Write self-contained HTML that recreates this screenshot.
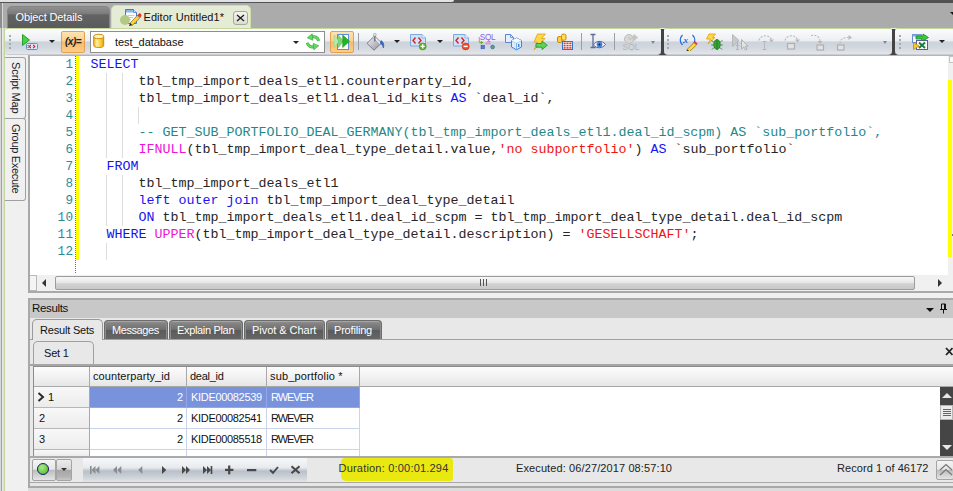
<!DOCTYPE html>
<html>
<head>
<meta charset="utf-8">
<title>Editor Untitled1*</title>
<style>
html,body{margin:0;padding:0;}
body{width:953px;height:491px;overflow:hidden;position:relative;background:#f0f0f0;font-family:"Liberation Sans",sans-serif;font-size:11px;color:#1e1e1e;}
.abs{position:absolute;}
div,span,svg{box-sizing:border-box;}
/* top band */
#topband{left:0;top:0;width:953px;height:28px;background:#ababab;}
#topline1{left:0;top:0;width:454px;height:2px;background:#dfe3e6;border-radius:0 0 3px 0;}
#topline2{left:0;top:0;width:953px;height:3px;background:#525252;}
#leftstrip{left:0;top:28px;width:5px;height:463px;background:linear-gradient(90deg,#d8d8d8 0 1px,#a2a2a2 1px 2px,#e8e8e8 2px 3px,#dcdcdc 3px 4px,#c3d69b 4px 5px);}
#leftstrip2{left:0;top:3px;width:3px;height:25px;background:linear-gradient(90deg,#8e8e8e 0 2px,#d8d8d8 2px 3px);}
/* tabs */
#tabObj{left:7px;top:6px;width:103px;height:23px;border-radius:5px 5px 0 0;background:linear-gradient(#909090,#7c7c7c 30%,#636363 36%,#5a5a5a);border:1px solid #858585;border-bottom:none;color:#fff;font-size:12px;line-height:22px;padding-left:8px;}
#tabEd{left:111px;top:5px;width:140px;height:24px;border-radius:5px 5px 0 0;background:#e5ecd5;border:1px solid #cfe0a8;border-bottom:none;color:#1e1e1e;font-size:12px;line-height:23px;}
/* toolbar */
.tb{top:28px;height:27px;background:linear-gradient(#fbfcfd,#eceef2 47%,#cdd3db 52%,#d3d8df 75%,#e2e5e9);border-top:1px solid #c6d79b;border-bottom:1px solid #c9ccd1;}
.orange{background:linear-gradient(#fde3b4,#fbcf8e 45%,#f9b863 50%,#fbd08c);border:1px solid #e9a04c;border-radius:2px;}
.arrow{width:0;height:0;border-left:3px solid transparent;border-right:3px solid transparent;border-top:3px solid #222;}
.sep{top:33px;width:1px;height:17px;background:#9a9ea6;}
/* editor */
#editor{left:28px;top:55px;width:925px;height:236px;background:#fff;border-left:2px solid #a9a9a9;border-top:1px solid #b4b4b4;}
.ln{position:absolute;left:30px;width:43.500px;text-align:right;color:#2b8c98;font-size:12.600px;letter-spacing:0.440px;height:17px;line-height:18px;font-family:"Liberation Mono",monospace;}
.cl{position:absolute;left:90.5px;white-space:pre;font-family:"Liberation Mono",monospace;font-size:13.33px;height:17px;line-height:17px;color:#262626;}
.k{color:#1414f0;}
.f{color:#f012d8;}
.s{color:#f01414;}
.c{color:#1f8888;}
.guide{position:absolute;width:1px;background:#dedede;}

/* results */
#split{left:28px;top:293px;width:925px;height:5px;background:#f0f0f0;}
#respanel{left:28px;top:298px;width:925px;height:188px;background:#e8e8e8;border-left:2px solid #a9a9a9;border-top:2px solid #a9a9a9;}
#reshead{left:30px;top:300px;width:923px;height:18px;background:#c8c8c8;}
.t{position:absolute;font-size:11px;line-height:14px;white-space:nowrap;color:#111;}
.rtab{top:320px;height:19px;border-radius:4px 4px 0 0;background:linear-gradient(#969696,#858585 12%,#707070 47%,#5b5b5b 53%,#666);border:1px solid #6c6c6c;border-bottom:none;box-shadow:inset 1px 0 0 #8c8c8c,inset -1px 0 0 #8c8c8c,inset 0 1px 0 #a4a4a4;}
.rtab .t{color:#fff;top:2px;}
#rtabsel{left:32px;top:319px;width:71px;height:21px;border-radius:5px 5px 0 0;background:#e8e8e8;border:1px solid #9a9a9a;border-bottom:none;}
#tabline{left:30px;top:339px;width:923px;height:1px;background:#a0a0a0;}
#settab{left:33px;top:341px;width:61px;height:24px;border-radius:5px 5px 0 0;background:#e8e8e8;border:1px solid #a0a0a0;border-bottom:none;}
#setline{left:30px;top:364px;width:923px;height:2px;background:#a6a6a6;}
#grid{left:33px;top:366px;width:920px;height:90px;background:#fff;border-top:1px solid #8c8c8c;border-left:1px solid #8c8c8c;}
.gh{position:absolute;top:367px;height:20px;background:linear-gradient(#fcfcfc,#f2f2f2 50%,#e6e6e6);border-right:1px solid #a8a8a8;border-bottom:1px solid #a8a8a8;}
.rh{position:absolute;left:34px;width:56px;height:21px;background:linear-gradient(#f8f8f8,#ececec);border-right:1px solid #a8a8a8;border-bottom:1px solid #b8b8b8;}
.gc{position:absolute;height:21px;border-right:1px solid #c9d3ea;border-bottom:1px solid #c9d3ea;background:#fff;}
.gc.sel{background:#7892dc;border-color:#92a8e6;}
.gc.sel .t{color:#fff;}
#status{left:30px;top:456px;width:923px;height:26px;background:#e8e8e8;border-top:2px solid #a9a9a9;}
.sbtn{position:absolute;top:459px;height:22px;border:1px solid #a4a4a4;border-radius:2px;background:linear-gradient(#f4f4f4,#e6e6e6 46%,#bdbdbd 52%,#d4d4d4 80%,#e4e4e4);}
#nav{left:83px;top:458px;width:224px;height:24px;background:linear-gradient(#f6f7f9,#e8ebee 40%,#b8c0c9 55%,#c8ced5 75%,#e2e5e8);}
.vt{writing-mode:vertical-rl;font-size:11px;line-height:14px;width:14px;color:#222;white-space:nowrap;}
</style>
</head>
<body>
<div id="topband" class="abs"></div>
<div id="topline2" class="abs"></div>
<div id="topline1" class="abs"></div>
<div class="abs" style="left:950px;top:12px;width:0;height:0;border-left:3px solid transparent;border-right:3px solid transparent;border-top:3px solid #111;"></div>
<div id="leftstrip" class="abs"></div>
<div id="leftstrip2" class="abs"></div>
<div id="tabObj" class="abs"></div>
<span class="t" style="left:15.500px;top:10px;letter-spacing:-0.12px;color:#fff">Object Details</span>
<div id="tabEd" class="abs"></div>
<svg class="abs" style="left:124px;top:8px" width="18" height="18" viewBox="0 0 18 18"><path d="M1.500 1.500 H9.500 L12.500 4.500 V15.500 H1.500 Z" fill="#fdfeff" stroke="#4a76c8"/><rect x="2" y="2" width="7.500" height="2.500" fill="#8fb4ee"/><path d="M9.500 1.500 V4.500 H12.500" fill="#dce8fa" stroke="#4a76c8" stroke-width="0.800"/><path d="M3.500 7.500 H10.500 M3.500 9.500 H9 M3.500 11.500 H7" stroke="#b8cdf0" stroke-width="1"/><path d="M6 15.200 L13.500 7.200 L16 9.700 L8.500 17.200 Z" fill="#ffd834" stroke="#7a5c10" stroke-width="0.700"/><path d="M13.500 7.200 L15 5.600 Q16 5 16.900 5.900 Q17.800 6.900 17.400 8 L16 9.700 Z" fill="#e63030"/><path d="M6 15.200 L8.500 17.200 L5 17.900 Z" fill="#222"/><path d="M12.600 8.200 L15.100 10.700" stroke="#9ab0d8" stroke-width="1"/></svg>
<div class="abs" style="left:120px;top:15px;width:10px;height:10px;border-radius:5px;background:#b1c985;"></div>
<span class="t" style="left:143.500px;top:9.500px;letter-spacing:0.06px;color:#111;font-size:11px">Editor Untitled1*</span>
<div class="abs" style="left:233px;top:11px;width:15px;height:14px;border:1px solid #a8aa98;border-radius:3px;background:linear-gradient(#f4f4ee,#dcdcd4);"></div>
<svg class="abs" style="left:236px;top:14px" width="9" height="8" viewBox="0 0 9 8"><path d="M1 1 L8 7 M8 1 L1 7" stroke="#222" stroke-width="1.400" fill="none"/></svg>

<!-- toolbars -->
<div class="abs" style="left:656px;top:29px;width:12px;height:26px;background:#444;"></div>
<div class="abs" style="left:888px;top:29px;width:12px;height:26px;background:#444;"></div>
<div class="abs tb" style="left:5px;width:656px;border-radius:3px 2px 4px 3px;"></div>
<div class="abs tb" style="left:664px;width:228px;border-radius:2px 2px 4px 4px;"></div>
<div class="abs tb" style="left:895px;width:60px;border-radius:3px 0 0 4px;"></div>

<!-- toolbar 1 contents -->
<svg class="abs" style="left:8px;top:34px" width="4" height="16" viewBox="0 0 4 16"><g fill="#a3a9b3"><rect x="1" y="1" width="2" height="2"/><rect x="1" y="5" width="2" height="2"/><rect x="1" y="9" width="2" height="2"/><rect x="1" y="13" width="2" height="2"/></g></svg>
<svg class="abs" style="left:21px;top:33px" width="18" height="18" viewBox="0 0 18 18"><path d="M1.5 1.5 L8.5 7 L1.5 12.5 Z" fill="#46d246" stroke="#2c9e2c" stroke-width="1"/><rect x="5.5" y="10.5" width="11" height="6" rx="1" fill="#d5e7f8" stroke="#5d8fd2"/><path d="M9.8 12 L8.2 13.5 L9.8 15 M12.2 12 L13.8 13.5 L12.2 15" fill="none" stroke="#d62222" stroke-width="1.1"/><rect x="6.6" y="12" width="1" height="1" fill="#d62222"/><rect x="6.6" y="14" width="1" height="1" fill="#d62222"/></svg>
<div class="abs arrow" style="left:49px;top:40px;border-left-width:3px;border-right-width:3px;border-top-width:3px"></div>
<div class="abs orange" style="left:61px;top:31px;width:24px;height:22px;"></div>
<div class="abs" style="left:65px;top:34px;width:18px;font:italic bold 10px 'Liberation Sans',sans-serif;line-height:15px;color:#222;letter-spacing:-0.5px;white-space:nowrap">(x)=</div>
<div class="abs" style="left:90px;top:31px;width:235px;height:22px;background:#fff;border:1px solid #8e8e8e;"></div>
<svg class="abs" style="left:92px;top:33px" width="14" height="16" viewBox="0 0 14 16"><defs><linearGradient id="cy" x1="0" x2="1" y1="0" y2="0"><stop offset="0" stop-color="#f2b21a"/><stop offset="0.300" stop-color="#fff0a0"/><stop offset="0.650" stop-color="#ffd23c"/><stop offset="1" stop-color="#e6a010"/></linearGradient></defs><path d="M1.700 3.500 V12.300 A5 2.200 0 0 0 11.700 12.300 V3.500 Z" fill="url(#cy)" stroke="#c98a0c"/><ellipse cx="6.700" cy="3.500" rx="5" ry="2.200" fill="#fff2b0" stroke="#c98a0c"/></svg>
<div class="abs" style="left:115px;top:35px;font-size:11px;line-height:14px;color:#111;white-space:nowrap;letter-spacing:-0.05px">test_database</div>
<div class="abs arrow" style="left:293px;top:41px;"></div>
<svg class="abs" style="left:306px;top:33px" width="14" height="17" viewBox="0 0 14 17"><path d="M12.600 7.800 C11.800 4.200 8.500 2.800 5.500 4.200" fill="none" stroke="#3aa83a" stroke-width="3"/><path d="M12.600 7.800 C11.800 4.200 8.500 2.800 5.500 4.200" fill="none" stroke="#62dc62" stroke-width="1.800"/><path d="M1.300 4.800 L6.200 0.800 L6.800 7.200 Z" fill="#62dc62" stroke="#3aa83a" stroke-width="0.700"/><path d="M1.400 9.800 C2.200 13.400 5.500 14.800 8.500 13.400" fill="none" stroke="#3aa83a" stroke-width="3"/><path d="M1.400 9.800 C2.200 13.400 5.500 14.800 8.500 13.400" fill="none" stroke="#62dc62" stroke-width="1.800"/><path d="M12.700 12.800 L7.800 16.800 L7.200 10.400 Z" fill="#62dc62" stroke="#3aa83a" stroke-width="0.700"/></svg>
<div class="abs orange" style="left:330px;top:31px;width:24px;height:22px;"></div>
<svg class="abs" style="left:333px;top:33px" width="18" height="18" viewBox="0 0 18 18"><rect x="4.500" y="1.500" width="11" height="15" fill="#fff" stroke="#5b8fd6"/><path d="M1.200 2 L6 8.300 L1.200 14.600 Z" fill="#b4ebb4" stroke="#8fd88f" stroke-width="0.500"/><path d="M5.400 2 L10.500 8.300 L5.400 14.600 Z" fill="#74d874" stroke="#52bd52" stroke-width="0.500"/><path d="M9.700 2 L16.600 8.300 L9.700 14.600 Z" fill="#22b422" stroke="#188a18" stroke-width="0.500"/></svg>
<div class="abs sep" style="left:358px;"></div>
<svg class="abs" style="left:366px;top:33px" width="19" height="18" viewBox="0 0 19 18"><defs><linearGradient id="bk" x1="0" y1="0" x2="1" y2="1"><stop offset="0" stop-color="#f4f4f8"/><stop offset="0.500" stop-color="#c2c2ca"/><stop offset="1" stop-color="#8e8e98"/></linearGradient></defs><path d="M1 10.300 L8.500 3 L15.500 10 L8 17.200 Z" fill="url(#bk)" stroke="#74747e" stroke-width="0.900"/><path d="M8.500 3 L15.500 10 L13.800 11.600 L6.800 4.600 Z" fill="#e9e9ee" stroke="#8a8a94" stroke-width="0.500"/><path d="M8.800 1.500 V8.500" stroke="#6a6a72" stroke-width="1.300" fill="none"/><circle cx="8.800" cy="1.800" r="1.400" fill="#f4f4f4" stroke="#8a8a8a" stroke-width="0.600"/><path d="M15 7.500 C17.800 9 18.400 12.500 17.300 15 C16.800 12.800 16.300 11.500 14.300 10.300 Z" fill="#2f66d4" stroke="#1f4cae" stroke-width="0.500"/></svg>
<div class="abs arrow" style="left:394px;top:40px;"></div>
<svg class="abs" style="left:409px;top:33px" width="19" height="18" viewBox="0 0 19 18"><path d="M1.500 1.500 H13 L16.500 5 V13 H1.500 Z" fill="#cfe3f8" stroke="#7fa8dc"/><path d="M13 1.5 V5 H16.5" fill="#eef5fd" stroke="#7fa8dc" stroke-width="0.8"/><path d="M6.5 4.5 L4 7.5 L6.5 10.5 M9.5 4.5 L12 7.5 L9.5 10.5" fill="none" stroke="#d62222" stroke-width="1.4"/><circle cx="13.700" cy="13.400" r="3.500" fill="#5fb52a" stroke="#3f8f14" stroke-width="0.600"/><path d="M13.700 11.300 V15.500 M11.600 13.400 H15.800" stroke="#fff" stroke-width="1.400"/></svg>
<div class="abs arrow" style="left:437px;top:40px;"></div>
<svg class="abs" style="left:452px;top:33px" width="19" height="18" viewBox="0 0 19 18"><path d="M1.500 1.500 H13 L16.500 5 V13 H1.500 Z" fill="#cfe3f8" stroke="#7fa8dc"/><path d="M13 1.5 V5 H16.5" fill="#eef5fd" stroke="#7fa8dc" stroke-width="0.8"/><path d="M6.5 4.5 L4 7.5 L6.5 10.5 M9.5 4.5 L12 7.5 L9.5 10.5" fill="none" stroke="#d62222" stroke-width="1.4"/><circle cx="13.700" cy="13.400" r="3.500" fill="#ee4a2a" stroke="#c42e12" stroke-width="0.600"/><path d="M11.600 13.400 H15.800" stroke="#fff" stroke-width="1.500"/></svg>
<!-- SQL icon -->
<svg class="abs" style="left:478px;top:33px" width="18" height="17" viewBox="0 0 18 17"><text x="1.800" y="7" font-family="Liberation Sans, sans-serif" font-size="8.200" fill="#8562ee" letter-spacing="-0.300">SQL</text><path d="M1.300 4 V9.500 H3" fill="none" stroke="#8aa030" stroke-width="0.800"/><path d="M2.800 7.800 L5.200 9.500 L2.800 11.200 Z" fill="#58a818"/><path d="M7.500 11 L10 8 L12.500 11 Z" fill="#f4a2dc" stroke="#dc6cc0" stroke-width="0.500"/><rect x="3" y="12.200" width="3.600" height="3.600" fill="#5878d8" stroke="#3858b0" stroke-width="0.500"/><circle cx="14.600" cy="14" r="1.900" fill="#58a868" stroke="#4868c8" stroke-width="0.700"/></svg>
<!-- copy cube -->
<svg class="abs" style="left:504px;top:33px" width="19" height="18" viewBox="0 0 19 18"><path d="M1.5 1.5 H6.5 L9.5 4.5 V9.5 H1.5 Z" fill="#e6effb" stroke="#5a86d0"/><path d="M6.5 1.5 V4.5 H9.5" fill="none" stroke="#5a86d0" stroke-width="0.8"/><path d="M7.5 7.5 L12.5 5 L17.5 7.5 V14 L12.5 16.8 L7.5 14 Z" fill="#d9ecfb" stroke="#3f86dc"/><path d="M7.5 7.5 L12.5 10 L17.5 7.5 M12.5 10 V16.8" fill="none" stroke="#6aa6e8" stroke-width="0.8"/><path d="M12.5 5 L17.5 7.5 L12.5 10 L7.5 7.5 Z" fill="#f4faff"/><rect x="14" y="11" width="1.4" height="3" fill="#3f86dc"/></svg>
<!-- lightning + arrow -->
<svg class="abs" style="left:531px;top:33px" width="18" height="18" viewBox="0 0 18 18"><path d="M6.500 1 H14.500 L10.500 5.500 H14 L3 17 L6.500 9 H3 Z" fill="#ffd84a" stroke="#e0a010" stroke-width="0.800"/><path d="M5 10.500 H11 V8 L16.300 12.300 L11 16.600 V14.200 H5 Z" fill="#5cd45c" stroke="#2a982a" stroke-width="0.900"/></svg>
<!-- coins + grid -->
<svg class="abs" style="left:556px;top:33px" width="19" height="18" viewBox="0 0 19 18"><rect x="1.5" y="3.5" width="4.5" height="6" rx="1.5" fill="#ffd23c" stroke="#c98a0c"/><rect x="5.5" y="1.2" width="4.5" height="6" rx="1.5" fill="#ffdc5a" stroke="#c98a0c"/><rect x="6.5" y="8.5" width="10" height="8" fill="#fff" stroke="#3a6fd0"/><g fill="#e23a2a"><rect x="7.5" y="9.5" width="2.2" height="1.6"/><rect x="10.4" y="9.5" width="2.2" height="1.6"/><rect x="13.3" y="9.5" width="2.2" height="1.6"/><rect x="7.5" y="11.8" width="2.2" height="1.6"/><rect x="10.4" y="11.8" width="2.2" height="1.6"/><rect x="13.3" y="11.8" width="2.2" height="1.6"/><rect x="7.5" y="14.1" width="2.2" height="1.6"/><rect x="10.4" y="14.1" width="2.2" height="1.6"/><rect x="13.3" y="14.1" width="2.2" height="1.6"/></g></svg>
<div class="abs sep" style="left:581px;"></div>
<!-- ibeam eye -->
<svg class="abs" style="left:589px;top:33px" width="18" height="18" viewBox="0 0 18 18"><path d="M1.5 1.5 H6.5 M4 1.5 V14.5 M1.5 14.5 H6.5" stroke="#5c6c9c" stroke-width="1.3" fill="none"/><path d="M4.5 12 C7 7.5 13 7 16.5 11.5 C13 15.5 8 16 4.5 12 Z" fill="#fff" stroke="#44527a" stroke-width="0.9"/><circle cx="10.5" cy="11.5" r="2.6" fill="#4a8cf0" stroke="#2a5cc0" stroke-width="0.6"/><circle cx="10.5" cy="11.5" r="1" fill="#123"/></svg>
<div class="abs sep" style="left:614px;"></div>
<!-- gray SQL -->
<svg class="abs" style="left:622px;top:33px" width="19" height="18" viewBox="0 0 19 18"><circle cx="7" cy="6" r="4.5" fill="#d8d8d8" stroke="#bdbdbd"/><path d="M7 3.5 V6 H9.5" stroke="#bdbdbd" fill="none"/><path d="M12.5 1.5 V7.5 M9.5 4.5 H15.5" stroke="#c4c4c4" stroke-width="2.4"/><text x="0.5" y="16.5" font-family="Liberation Sans, sans-serif" font-size="8.5" fill="#b4b4b4">SQL</text></svg>
<div class="abs arrow" style="left:651px;top:41px;border-top-color:#7c88a4;border-left-width:2.5px;border-right-width:2.5px"></div>
<!-- toolbar 2 -->
<svg class="abs" style="left:667px;top:34px" width="4" height="16" viewBox="0 0 4 16"><g fill="#a3a9b3"><rect x="0" y="1" width="2" height="2"/><rect x="0" y="5" width="2" height="2"/><rect x="0" y="9" width="2" height="2"/><rect x="0" y="13" width="2" height="2"/></g></svg>
<svg class="abs" style="left:679px;top:33px" width="19" height="18" viewBox="0 0 19 18"><path d="M3.5 2 C0.5 5 0.5 9 3.5 12 M13.5 2 C16.5 5 16.5 9 13.5 12" fill="none" stroke="#2a6ae0" stroke-width="1.3"/><text x="4.6" y="10" font-family="Liberation Serif, serif" font-style="italic" font-weight="bold" font-size="9" fill="#2a6ae0">x</text><rect x="4" y="9" width="1.2" height="1.2" fill="#2a6ae0"/><path d="M8 16.5 L15 9.5 L17.5 12 L10.5 18.5 Z" fill="#ffd83a" stroke="#8a6a10" stroke-width="0.7"/><path d="M15 9.5 L16.2 8.3 L18.7 10.8 L17.5 12 Z" fill="#e03a3a"/><path d="M8 16.5 L10.5 18.5 L7.3 18.8 Z" fill="#222"/></svg>
<svg class="abs" style="left:705px;top:33px" width="19" height="18" viewBox="0 0 19 18"><path d="M4 1 H10.5 L7.5 4.5 H10 L3 11 L5.5 6 H1.5 Z" fill="#ffd84a" stroke="#e0a010" stroke-width="0.8"/><ellipse cx="12" cy="11.5" rx="3.2" ry="5" fill="#34a834" stroke="#1c7a1c" stroke-width="0.8"/><path d="M12 7 V16 M8.8 9 L6.5 7.5 M15.2 9 L17.5 7.5 M8.8 12 H6.3 M15.2 12 H17.7 M9 14.5 L7 16.5 M15 14.5 L17 16.5" stroke="#2a6a2a" stroke-width="0.8" fill="none"/></svg>
<svg class="abs" style="left:731px;top:33px" width="19" height="18" viewBox="0 0 19 18"><path d="M1.5 1.5 L8 7.5 L1.5 13.5 Z" fill="#c8c8c8" stroke="#b0b0b0" stroke-width="0.8"/><path d="M5 12.5 H8 M6.5 8 V16.5 M5 16.5 H8" stroke="#b4b4b4" fill="none"/><path d="M10.5 6.5 V16 L12.8 13.8 L14.5 17 L16 16.2 L14.4 13.2 H17 Z" fill="#e4e4e4" stroke="#aaa" stroke-width="0.9"/></svg>
<svg class="abs" style="left:757px;top:33px" width="19" height="18" viewBox="0 0 19 18"><path d="M2 7.5 C3 2 12 1 14.5 6.5" fill="none" stroke="#b8b8b8" stroke-width="1.1" stroke-dasharray="2 1.4"/><path d="M12 6.5 H17 L14.5 9.5 Z" fill="#b8b8b8"/><path d="M5.5 8.5 H9.5 M7.5 8.5 V16.5 M5.5 16.5 H9.5" stroke="#b8b8b8" fill="none"/></svg>
<svg class="abs" style="left:783px;top:33px" width="19" height="18" viewBox="0 0 19 18"><path d="M2 7.5 C3 2 12 1 14.5 6.5" fill="none" stroke="#b8b8b8" stroke-width="1.1" stroke-dasharray="2 1.4"/><path d="M12 6.5 H17 L14.5 9.5 Z" fill="#b8b8b8"/><rect x="4.5" y="10.5" width="7" height="5.5" fill="#e2e2e2" stroke="#b0b0b0" stroke-width="1.2"/></svg>
<svg class="abs" style="left:809px;top:33px" width="19" height="18" viewBox="0 0 19 18"><path d="M2 2.5 C7 1.5 10.5 3.5 11 8" fill="none" stroke="#b8b8b8" stroke-width="1.1" stroke-dasharray="2 1.4"/><path d="M8.5 8 H13.5 L11 11 Z" fill="#b8b8b8"/><rect x="8" y="12" width="6.5" height="5" fill="#e2e2e2" stroke="#b0b0b0" stroke-width="1.2"/></svg>
<svg class="abs" style="left:835px;top:33px" width="19" height="18" viewBox="0 0 19 18"><path d="M5 10.5 C5 6 9 4.5 13.5 4.5" fill="none" stroke="#b8b8b8" stroke-width="1.1" stroke-dasharray="2 1.4"/><path d="M13.5 2 V7 L17 4.5 Z" fill="#b8b8b8"/><rect x="2.5" y="12" width="6.5" height="5" fill="#e2e2e2" stroke="#b0b0b0" stroke-width="1.2"/></svg>
<div class="abs arrow" style="left:883px;top:41px;border-top-color:#7c88a4;border-left-width:2.5px;border-right-width:2.5px"></div>
<!-- toolbar 3 -->
<svg class="abs" style="left:899px;top:34px" width="4" height="16" viewBox="0 0 4 16"><g fill="#a3a9b3"><rect x="0" y="1" width="2" height="2"/><rect x="0" y="5" width="2" height="2"/><rect x="0" y="9" width="2" height="2"/><rect x="0" y="13" width="2" height="2"/></g></svg>
<svg class="abs" style="left:911px;top:32px" width="19" height="19" viewBox="0 0 19 19"><rect x="1.5" y="2.5" width="9" height="8" fill="#f4f8ff" stroke="#6a8ad0"/><rect x="1.5" y="2.5" width="9" height="2" fill="#88a8e8"/><rect x="5.500" y="8.500" width="11" height="9" fill="#fff" stroke="#5a5ab0"/><path d="M8 10.5 L14 16 M14 10.500 L8 16" stroke="#1c7c3c" stroke-width="2"/><path d="M5 4 H12 V2 L17.500 5.500 L12 9 V7 H5 Z" fill="#3cc83c" stroke="#1c8c1c" stroke-width="0.8"/><path d="M2.500 10.500 L8 14 L2.500 17.500 Z" fill="#ffc81c" stroke="#c08a0c" stroke-width="0.8"/></svg>
<div class="abs arrow" style="left:939px;top:40px;"></div>

<div id="editor" class="abs"></div>
<div class="ln" style="top:56px">1</div>
<div class="cl" style="top:56px"><span class="k">SELECT</span></div>
<div class="ln" style="top:73px">2</div>
<div class="cl" style="top:73px">      tbl_tmp_import_deals_etl1.counterparty_id,</div>
<div class="ln" style="top:90px">3</div>
<div class="cl" style="top:90px">      tbl_tmp_import_deals_etl1.deal_id_kits <span class="k">AS</span> `deal_id`,</div>
<div class="ln" style="top:107px">4</div>
<div class="ln" style="top:124px">5</div>
<div class="cl" style="top:124px">      <span class="c">-- GET_SUB_PORTFOLIO_DEAL_GERMANY(tbl_tmp_import_deals_etl1.deal_id_scpm) AS `sub_portfolio`,</span></div>
<div class="ln" style="top:141px">6</div>
<div class="cl" style="top:141px">      <span class="f">IFNULL</span>(tbl_tmp_import_deal_type_detail.value,<span class="s">'no subportfolio'</span>) <span class="k">AS</span> `sub_portfolio`</div>
<div class="ln" style="top:158px">7</div>
<div class="cl" style="top:158px">  <span class="k">FROM</span></div>
<div class="ln" style="top:175px">8</div>
<div class="cl" style="top:175px">      tbl_tmp_import_deals_etl1</div>
<div class="ln" style="top:192px">9</div>
<div class="cl" style="top:192px">      <span class="k">left outer join</span> tbl_tmp_import_deal_type_detail</div>
<div class="ln" style="top:209px">10</div>
<div class="cl" style="top:209px">      <span class="k">ON</span> tbl_tmp_import_deals_etl1.deal_id_scpm = tbl_tmp_import_deal_type_detail.deal_id_scpm</div>
<div class="ln" style="top:226px">11</div>
<div class="cl" style="top:226px">  <span class="k">WHERE</span> <span class="f">UPPER</span>(tbl_tmp_import_deal_type_detail.description) = <span class="s">'GESELLSCHAFT'</span>;</div>
<div class="ln" style="top:243px">12</div>
<div class="guide" style="left:106px;top:73px;height:85px"></div>
<div class="guide" style="left:122px;top:73px;height:85px"></div>
<div class="guide" style="left:138px;top:107px;height:17px"></div>
<div class="guide" style="left:106px;top:175px;height:51px"></div>
<div class="guide" style="left:122px;top:175px;height:51px"></div>
<div class="guide" style="left:106px;top:243px;height:17px"></div>
<div class="abs" style="left:75px;top:56px;width:1px;height:218px;background:repeating-linear-gradient(#2b8c98 0 1px,#fff 1px 2px)"></div>
<div class="abs" style="left:76px;top:56px;width:3px;height:204px;background:#ffff00"></div>
<div class="abs" style="left:948px;top:56px;width:5px;height:235px;background:#f0f0f0"></div>
<div class="abs" style="left:949px;top:56px;width:5px;height:7px;border:1px solid #c4c4c4;background:#f8f8f8"></div>
<div class="abs" style="left:948px;top:80px;width:4px;height:177px;background:#ffff00"></div>
<div class="abs" style="left:952px;top:234px;width:1px;height:2px;background:#6a7a9a"></div>

<!-- horizontal scrollbar -->
<div class="abs" style="left:30px;top:275px;width:919px;height:16px;background:#f0f0f0;"></div>
<div class="abs" style="left:30px;top:275px;width:7px;height:16px;background:#f4f4f4;border:1px solid #b8b8b8;border-left:none"></div>
<div class="abs" style="left:42px;top:279px;width:0;height:0;border-top:4px solid transparent;border-bottom:4px solid transparent;border-right:4px solid #333;"></div>
<div class="abs" style="left:55px;top:276px;width:860px;height:14px;border:1px solid #9c9c9c;border-radius:2px;background:linear-gradient(#f8f8f8,#e6e6e6 50%,#d2d2d2 55%,#c8c8c8);"></div>
<div class="abs" style="left:480px;top:279px;width:7px;height:7px;background:repeating-linear-gradient(90deg,#555 0 1px,transparent 1px 3px)"></div>
<div class="abs" style="left:938px;top:279px;width:0;height:0;border-top:4px solid transparent;border-bottom:4px solid transparent;border-left:4px solid #333;"></div>
<div class="abs" style="left:28px;top:291px;width:925px;height:2px;background:#a9a9a9;"></div>
<!-- side tabs -->
<div class="abs" style="left:5px;top:57px;width:21px;height:62px;border:1px solid #a0a0a0;border-left:none;border-radius:0 3px 3px 0;background:#f0f0f0;"></div>
<div class="abs" style="left:5px;top:118px;width:21px;height:83px;border:1px solid #a0a0a0;border-left:none;border-radius:0 3px 3px 0;background:#f0f0f0;"></div>
<div class="abs vt" style="left:9px;top:61.500px;letter-spacing:-0.100px">Script Map</div>
<div class="abs vt" style="left:9px;top:124px;letter-spacing:-0.320px">Group Execute</div>
<!-- MARK:EDITOR3 -->


<div id="split" class="abs"></div>
<div id="respanel" class="abs"></div>
<div id="reshead" class="abs"><span class="t" style="left:2px;top:1px;font-size:11.5px;letter-spacing:-0.35px">Results</span></div>
<div class="abs" style="left:926px;top:308px;width:0;height:0;border-left:4px solid transparent;border-right:4px solid transparent;border-top:4px solid #111;"></div>
<svg class="abs" style="left:939px;top:303px" width="9" height="11" viewBox="0 0 9 11"><path d="M2.500 1 H6.500 M2.500 1 V6 M5.500 1 V6 M6.500 1 V6 M1 6.500 H8 M4.500 7 V10.500" stroke="#111" stroke-width="1" fill="none"/></svg>
<div id="tabline" class="abs"></div>
<div id="rtabsel" class="abs"><span class="t" style="left:7px;top:3px;letter-spacing:-0.19px">Result Sets</span></div>
<div class="abs rtab" style="left:104px;width:64px;"><span class="t" style="left:7px;letter-spacing:-0.42px">Messages</span></div>
<div class="abs rtab" style="left:169px;width:74px;"><span class="t" style="left:7px;letter-spacing:-0.33px">Explain Plan</span></div>
<div class="abs rtab" style="left:244px;width:81px;"><span class="t" style="left:7px;letter-spacing:-0.04px">Pivot &amp; Chart</span></div>
<div class="abs rtab" style="left:326px;width:56px;"><span class="t" style="left:7px;letter-spacing:-0.19px">Profiling</span></div>
<div id="settab" class="abs"><span class="t" style="left:10px;top:4px;letter-spacing:-0.2px">Set 1</span></div>
<svg class="abs" style="left:945px;top:347px" width="8" height="9" viewBox="0 0 8 9"><path d="M1 1 L7.500 8 M7.500 1 L1 8" stroke="#222" stroke-width="1.800" fill="none"/></svg>
<div id="setline" class="abs"></div>
<div id="grid" class="abs"></div>
<div class="gh" style="left:34px;width:56px;"></div>
<div class="gh" style="left:90px;width:97px;"><span class="t" style="left:3px;top:2px;letter-spacing:0.08px">counterparty_id</span></div>
<div class="gh" style="left:187px;width:80px;"><span class="t" style="left:3px;top:2px;letter-spacing:-0.28px">deal_id</span></div>
<div class="gh" style="left:267px;width:93px;"><span class="t" style="left:3px;top:2px;letter-spacing:0.16px">sub_portfolio *</span></div>
<div class="gh" style="left:360px;width:593px;border-right:none"></div>
<div class="rh" style="left:34px;top:387px;width:56px;"><span class="t" style="left:14px;top:3px">1</span></div>
<div class="gc sel" style="left:90px;top:387px;width:97px;"><span class="t" style="right:3px;top:3px">2</span></div>
<div class="gc sel" style="left:187px;top:387px;width:80px;"><span class="t" style="left:4px;top:3px;letter-spacing:-0.32px">KIDE00082539</span></div>
<div class="gc sel" style="left:267px;top:387px;width:93px;"><span class="t" style="left:4px;top:3px;letter-spacing:-1.05px">RWEVER</span></div>
<div class="rh" style="left:34px;top:408px;width:56px;"><span class="t" style="left:5px;top:3px">2</span></div>
<div class="gc" style="left:90px;top:408px;width:97px;"><span class="t" style="right:3px;top:3px">2</span></div>
<div class="gc" style="left:187px;top:408px;width:80px;"><span class="t" style="left:4px;top:3px;letter-spacing:-0.32px">KIDE00082541</span></div>
<div class="gc" style="left:267px;top:408px;width:93px;"><span class="t" style="left:4px;top:3px;letter-spacing:-1.05px">RWEVER</span></div>
<div class="rh" style="left:34px;top:429px;width:56px;"><span class="t" style="left:5px;top:3px">3</span></div>
<div class="gc" style="left:90px;top:429px;width:97px;"><span class="t" style="right:3px;top:3px">2</span></div>
<div class="gc" style="left:187px;top:429px;width:80px;"><span class="t" style="left:4px;top:3px;letter-spacing:-0.32px">KIDE00085518</span></div>
<div class="gc" style="left:267px;top:429px;width:93px;"><span class="t" style="left:4px;top:3px;letter-spacing:-1.05px">RWEVER</span></div>
<div class="rh" style="left:34px;top:450px;width:56px;height:6px;border-bottom:none;"></div>
<div class="gc" style="left:90px;top:450px;width:97px;height:6px;border-bottom:none;"></div>
<div class="gc" style="left:187px;top:450px;width:80px;height:6px;border-bottom:none;"></div>
<div class="gc" style="left:267px;top:450px;width:93px;height:6px;border-bottom:none;"></div>
<svg class="abs" style="left:37px;top:392px" width="8" height="10" viewBox="0 0 8 10"><path d="M1.500 1 L6 5 L1.500 9" stroke="#2a2a2a" stroke-width="2" fill="none"/></svg>
<!-- grid vertical scrollbar -->
<div class="abs" style="left:940px;top:387px;width:13px;height:69px;background:#454545;"></div>
<div class="abs" style="left:942px;top:393px;width:0;height:0;border-left:5px solid transparent;border-right:5px solid transparent;border-bottom:5px solid #e8e8e8;"></div>
<div class="abs" style="left:940px;top:405px;width:13px;height:15px;background:#ececec;border:1px solid #b4b4b4;"></div>
<div class="abs" style="left:943px;top:409px;width:8px;height:7px;background:repeating-linear-gradient(#666 0 1px,transparent 1px 2px)"></div>
<div class="abs" style="left:942px;top:445px;width:0;height:0;border-left:5px solid transparent;border-right:5px solid transparent;border-top:5px solid #e8e8e8;"></div>
<div id="status" class="abs"></div>
<div class="sbtn" style="left:32px;width:24px;"></div>
<div class="sbtn" style="left:56px;width:16px;background:linear-gradient(#ececec,#d8d8d8 46%,#a6a6a6 52%,#b4b4b4 85%,#c8c8c8);"></div>
<svg class="abs" style="left:36px;top:462px" width="14" height="14" viewBox="0 0 14 14"><defs><radialGradient id="gb" cx="0.4" cy="0.35" r="0.7"><stop offset="0" stop-color="#a8ec88"/><stop offset="1" stop-color="#52c02a"/></radialGradient></defs><circle cx="7" cy="7" r="5.500" fill="url(#gb)" stroke="#1a1a7a" stroke-width="1"/></svg>
<div class="abs" style="left:61px;top:468px;width:0;height:0;border-left:3px solid transparent;border-right:3px solid transparent;border-top:3px solid #333;"></div>
<div id="nav" class="abs"></div>
<svg class="abs" style="left:83px;top:458px" width="224" height="24" viewBox="0 0 224 24">
<g fill="#8a8d90" stroke="none">
<rect x="7" y="8" width="1.600" height="8"/><path d="M12.500 8 V16 L8.600 12 Z"/><path d="M16.400 8 V16 L12.500 12 Z"/>
<path d="M34 8 V16 L30 12 Z"/><path d="M38.300 8 V16 L34.300 12 Z"/>
<path d="M59.300 8 V16 L55.200 12 Z"/>
</g>
<g fill="#484848" stroke="none">
<path d="M79 8 V16 L83.300 12 Z"/>
<path d="M99 8 V16 L103 12 Z"/><path d="M103 8 V16 L107 12 Z"/>
<path d="M120 8 V16 L124 12 Z"/><path d="M124 8 V16 L128 12 Z"/><rect x="127.700" y="8" width="1.600" height="8"/>
<rect x="142" y="10.800" width="8.400" height="2.200"/><rect x="145.100" y="7.500" width="2.200" height="8.800"/>
<rect x="164" y="11" width="9.300" height="2.200"/>
</g>
<path d="M187 12 L190 14.800 L195 9" stroke="#484848" stroke-width="1.900" fill="none"/>
<path d="M208.500 8.300 L216.500 15.200 M216.500 8.300 L208.500 15.200" stroke="#484848" stroke-width="2.100" fill="none"/>
</svg>

<div class="abs" style="left:341px;top:458px;width:112px;height:23px;background:#e9e911;border-radius:4px 3px 3px 5px"></div>
<span class="t" style="left:338.500px;top:461px;letter-spacing:0.2px;color:#333">Duration: 0:00:01.294</span>
<span class="t" style="left:516px;top:461px;letter-spacing:0.11px;color:#222">Executed: 06/27/2017 08:57:10</span>
<span class="t" style="left:837px;top:461px;letter-spacing:0.06px;color:#222">Record 1 of 46172</span>
<div class="sbtn" style="left:936px;top:460px;width:18px;height:20px;"></div>
<svg class="abs" style="left:939px;top:463px" width="14" height="14" viewBox="0 0 14 14"><path d="M1 7 L7 1.500 L13 7 M1 12 L7 6.500 L13 12" stroke="#777" stroke-width="1.200" fill="none"/></svg>
<!-- bottom edge -->
<div class="abs" style="left:30px;top:482px;width:923px;height:1px;background:#a8a8a8;"></div>
<div class="abs" style="left:30px;top:483px;width:923px;height:3px;background:#e6e6e6;"></div>
<div class="abs" style="left:28px;top:486px;width:925px;height:2px;background:#a8a8a8;"></div>
<div class="abs" style="left:28px;top:488px;width:925px;height:3px;background:#dcdcdc;"></div>
<!-- MARK:RESULTS2 -->

</body>
</html>
